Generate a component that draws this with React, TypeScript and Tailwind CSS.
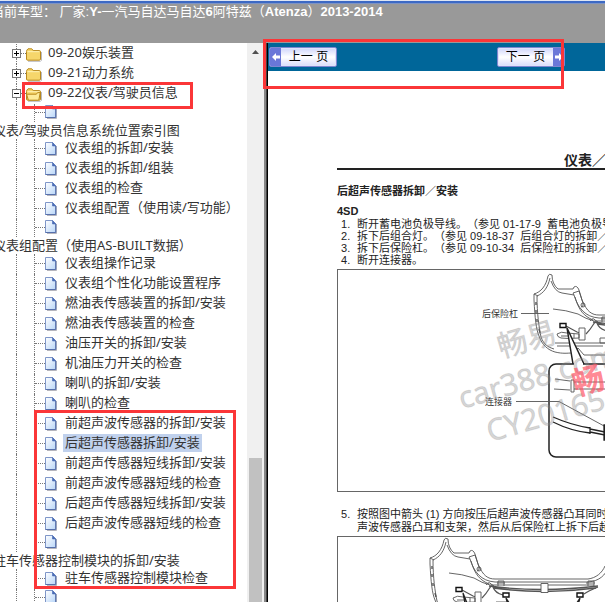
import type { ReactNode } from "react";

type TreeItem = {
  label?: string;
  wrapped?: boolean;
  active?: boolean;
};

const folders = [
  { label: "09-20娱乐装置", open: false },
  { label: "09-21动力系统", open: false },
  { label: "09-22仪表/驾驶员信息", open: true },
];

const items: TreeItem[] = [
  { label: "仪表/驾驶员信息系统位置索引图", wrapped: true },
  { label: "仪表组的拆卸/安装" },
  { label: "仪表组的拆卸/组装" },
  { label: "仪表组的检查" },
  { label: "仪表组配置（使用读/写功能）" },
  { label: "仪表组配置（使用AS-BUILT数据）", wrapped: true },
  { label: "仪表组操作记录" },
  { label: "仪表组个性化功能设置程序" },
  { label: "燃油表传感装置的拆卸/安装" },
  { label: "燃油表传感装置的检查" },
  { label: "油压开关的拆卸/安装" },
  { label: "机油压力开关的检查" },
  { label: "喇叭的拆卸/安装" },
  { label: "喇叭的检查" },
  { label: "前超声波传感器的拆卸/安装" },
  { label: "后超声传感器拆卸/安装", active: true },
  { label: "前超声传感器短线拆卸/安装" },
  { label: "前超声波传感器短线的检查" },
  { label: "后超声传感器短线拆卸/安装" },
  { label: "后超声波传感器短线的检查" },
  { label: "驻车传感器控制模块的拆卸/安装", wrapped: true },
  { label: "驻车传感器控制模块检查" },
  { wrapped: true },
];

const FolderIcon = ({ open }: { open: boolean }) => (
  <svg className="mt-1 h-[14px] w-4 shrink-0" viewBox="0 0 16 14">
    <path d="M2 13.3h12.5l1-1V4" fill="none" stroke="#b9b9c0" />
    <path
      d="M.5 3.5V11a1.2 1.2 0 0 0 1.2 1.2h11.6a1.2 1.2 0 0 0 1.2-1.2V3.8a1.2 1.2 0 0 0-1.2-1.2H7.2L5.8.8H2L.8 2.2z"
      fill="#f6d66b"
      stroke="#b8891c"
    />
    <path d="M1.5 3.7h12" stroke="#fff3b8" />
    {open && (
      <path
        d="M.6 6.2h9.8l1.2-1.6h2.6l-1.2 6.6a1.2 1.2 0 0 1-1.2 1H3.2a1.2 1.2 0 0 1-1.1-.9z"
        fill="#fdeb9a"
        stroke="#b8891c"
      />
    )}
  </svg>
);

const PageIcon = () => (
  <svg className="h-[14px] w-3 shrink-0" viewBox="0 0 12 14">
    <defs>
      <linearGradient id="page" x1="0" y1="0" x2="1" y2="1">
        <stop offset="0" stopColor="#ffffff" />
        <stop offset="1" stopColor="#b9d6f8" />
      </linearGradient>
    </defs>
    <path d="M2 13.5h9.5V4" fill="none" stroke="#b5b5bd" />
    <path d="M.5.5h7L10.7 4v8.5H.5z" fill="url(#page)" stroke="#7f96c8" />
    <path d="M7.5.5V4h3.2z" fill="#4a6cb5" stroke="#4a6cb5" strokeWidth=".6" />
    <path d="M.5 12.5h10.2V4" fill="none" stroke="#5670ac" />
  </svg>
);

const FolderRow = ({ label, open }: { label: string; open: boolean }) => (
  <li className="flex h-5 pl-[19px]">
    <div className="flex w-[9px] flex-col items-center">
      <div className="h-[5px] border-l border-dotted border-[#777]" />
      <button
        aria-label={label}
        className="relative flex h-[9px] w-[9px] shrink-0 items-center justify-center border border-[#777] bg-white"
      >
        <span className="h-px w-[5px] bg-black" />
        {!open && <span className="absolute h-[5px] w-px bg-black" />}
      </button>
      <div className="flex-1 border-l border-dotted border-[#777]" />
    </div>
    <div className="mt-[9px] h-px w-[5px] border-t border-dotted border-[#777]" />
    <FolderIcon open={open} />
    <a href="#" className="ml-1 px-0.5 leading-4">
      {label}
    </a>
  </li>
);

const PageRow = ({ label, wrapped, active }: TreeItem) => (
  <li>
    <div className={wrapped ? "flex h-[18px] pl-[23px]" : "flex h-5 pl-[23px]"}>
      <div className="w-[18px] border-l border-dotted border-[#777]" />
      <div className="w-[11px] border-l border-dotted border-[#777]">
        <div className={wrapped ? "mt-2 border-t border-dotted border-[#777]" : "mt-[9px] border-t border-dotted border-[#777]"} />
      </div>
      <div className={wrapped ? "pt-px" : "pt-[3px]"}>
        <PageIcon />
      </div>
      {!wrapped && (
        <a
          href="#"
          className={
            active
              ? "ml-1.5 h-[18px] bg-[#c0d1ed] px-0.5 leading-4"
              : "ml-1.5 px-0.5 leading-4"
          }
        >
          {label}
        </a>
      )}
    </div>
    {wrapped && (
      <a href="#" className="block h-[17px] leading-[17px]">
        {label}
      </a>
    )}
  </li>
);

const Sidebar = () => (
  <aside className="flex w-[264px] shrink-0 overflow-hidden bg-white">
    <nav className="min-w-0 flex-1 overflow-hidden pt-px">
      <ul className="-ml-[7px] font-['Noto_Sans','Noto_Sans_CJK_SC',sans-serif] text-[13px] whitespace-nowrap text-[#333]">
        {folders.map((folder) => (
          <FolderRow key={folder.label} {...folder} />
        ))}
        {items.map((item, index) => (
          <PageRow key={index} {...item} />
        ))}
      </ul>
    </nav>
    <div className="flex w-[17px] flex-col items-center justify-between bg-[#f0f0f0]">
      <svg className="mt-[7px] h-1 w-[7px]" viewBox="0 0 7 4">
        <path d="M0 4 3.5 0 7 4z" fill="#505050" />
      </svg>
      <div className="h-[144px] w-[13px] bg-[#c1c1c1]" />
    </div>
  </aside>
);

const ArrowCap = ({ direction }: { direction: "left" | "right" }) => (
  <span className="flex w-[11px] items-center justify-center bg-[#6a77d8]">
    <svg className="h-2 w-2" viewBox="0 0 8 8">
      <path
        d={direction === "left" ? "M0 4 4 0v2.5h4v3H4V8z" : "M8 4 4 0v2.5H0v3h4V8z"}
        fill="#fff"
      />
    </svg>
  </span>
);

const PagerButton = ({ direction, children }: { direction: "left" | "right"; children: ReactNode }) => (
  <button className="flex h-5 w-[68px] overflow-hidden rounded-xs border border-[#7e86d0] bg-linear-to-b from-[#cfd4fb] via-white to-[#d9dcfa] text-xs text-black shadow-[0_0_0_1px_#dfe3fa_inset]">
    {direction === "left" && <ArrowCap direction="left" />}
    <span className="flex-1 text-center leading-[18px] whitespace-nowrap">{children}</span>
    {direction === "right" && <ArrowCap direction="right" />}
  </button>
);

const Bumper = () => (
  <g fill="none" stroke="#555" strokeWidth=".9">
    <path d="M548 276C546 286 541 292 534 294L534 300C535 318 536 329 539 336C542 345 548 350 555 352C563 354 568 353 572 353L578 348L584 355H700" />
    <path d="M548 276Q549 273 552 275Q552 284 558 289H573L574 287Q577 285 579 290L582 300C587 312 592 315 599 315H692C700 314 706 309 709 302" />
    <path d="M550 278C548 287 544 293 537 296C537 314 539 327 541 337C544 345 548 347 554 349" />
    <path d="M534 294L538 296M551 281Q555 292 562 293L574 295C578 308 585 317 599 318H692C704 317 709 311 713 303" />
    <path d="M574 295L573 293L579 291L583 303Q584 307 581 307M553 309Q566 310 578 314Q586 319 594 321H698" />
    <path d="M575 297C579 311 584 316 593 320" />
    <circle cx="583" cy="305" r="2" />
    <path d="M536 302v3M536 310v3M537 319v3M539 329l1 4" strokeWidth="1.4" />
    <path d="M590 321q3-4 5-1l3 2M602 322v-5h6v5M698 322v-5h-6v5M601 319h8M690 319h9" />
    <path d="M593 322Q645 329 702 322M597 324Q648 331 700 324" strokeWidth="1.3" />
    <path d="M645 319.5h7v9h-7z" fill="#fff" />
    <path d="M566 326l11 6 3 1M586 334q4-4 7-9t4-2q2 6 10 8M702 323q-10 4-14 7" strokeWidth="1.2" />
    <path d="M579 328h6v12h-6z" fill="#fff" />
    <path d="M557 334q4-3 10-1l12 1v4q-12 1-18 0-4-1-4-4zM569 334v4M574 334v4M561 336h8" />
    <path d="M555 343h50M557 346h46M600 338h12v5h-12zM610 346h88" />
    <path d="M560 323.5h6v4h-6zM607 329h6v4h-6zM681 329h6v4h-6z" stroke="#111" strokeWidth="1.4" fill="#fff" />
  </g>
);

const ConnectorFigure = () => (
  <svg className="block h-[221px] w-[430px]" viewBox="338 270 430 221">
    <Bumper />
    <path d="M573 364L567 328L584 364" fill="#fff" stroke="#222" strokeWidth="1.5" />
    <rect x="549" y="364" width="190" height="93" rx="7" fill="#fff" stroke="#222" strokeWidth="1.5" />
    <path d="M574 364h9" stroke="#fff" strokeWidth="2" />
    <g fill="none" stroke="#555" strokeWidth=".9">
      <path d="M555 379l15 2M554 389l16 1M574 382h40M574 389h40" />
      <path d="M571 380h3v12h-3z" />
      <path d="M521 313.5h28M516 401.5h43l46 25" />
    </g>
    <g fill="none" stroke="#222" strokeWidth="1.3">
      <path d="M553 417q18 8 37 11M553 422q18 9 37 11M590 427v7M590 429l15 3M590 432l15 3" />
      <path d="M604 425h8v15h-8z" fill="#222" />
    </g>
    <g className="font-['Noto_Sans_CJK_SC',sans-serif] text-[9px]" fill="#333">
      <text x="482" y="317">后保险杠</text>
      <text x="485" y="405">连接器</text>
    </g>
    <g
      className="font-['Noto_Sans','Noto_Sans_CJK_SC',sans-serif] text-[30px]"
      fill="#888"
      fillOpacity=".36"
      stroke="#888"
      strokeOpacity=".2"
      strokeWidth="1"
    >
      <text transform="translate(501 358) rotate(-16)">畅易</text>
      <text transform="translate(462 409) rotate(-16)">car388.com</text>
      <text transform="translate(490 442) rotate(-16)">CY20165</text>
    </g>
    <text
      className="font-['Noto_Sans_CJK_SC',sans-serif] text-[32px] font-bold"
      fill="#ff5566"
      fillOpacity=".7"
      transform="translate(576 396) rotate(-16)"
    >
      畅易
    </text>
  </svg>
);

const SensorFigure = () => (
  <svg className="block h-[221px] w-[430px]" viewBox="338 536 430 221">
    <g transform="translate(-104 263)">
      <Bumper />
      <path d="M567 329l4 20M567 329l8 20M610 334l4 14M610 334l9 14M684 334l-4 14M684 334l-9 14" stroke="#222" strokeWidth="1.3" />
    </g>
  </svg>
);

const Step = ({ number, children }: { number: number; children: ReactNode }) => (
  <li className="flex">
    <span className="w-4 shrink-0">{number}.</span>
    <p className="whitespace-pre">{children}</p>
  </li>
);

const Manual = () => (
  <article className="overflow-hidden pt-[79px] pl-[69px] font-['Liberation_Sans','Noto_Sans_CJK_SC',sans-serif] text-[11px] leading-3 whitespace-nowrap text-[#222] [text-spacing-trim:space-all]">
    <h1 className="flex h-5 w-[432px] border-b-2 border-[#222] pl-[227px] text-sm leading-5 font-bold">
      <span>仪表／驾驶员信息</span>
    </h1>
    <h2 className="mt-[15px] text-[11px] leading-3 font-bold">后超声传感器拆卸／安装</h2>
    <h3 className="mt-2 text-[11px] leading-3 font-bold">4SD</h3>
    <ol className="mt-px pl-1">
      <Step number={1}>断开蓄电池负极导线。（参见 01-17-9  蓄电池负极导线的断开／连接）</Step>
      <Step number={2}>拆下后组合灯。（参见 09-18-37  后组合灯的拆卸／安装）</Step>
      <Step number={3}>拆下后保险杠。（参见 09-10-34  后保险杠的拆卸／安装）</Step>
      <Step number={4}>断开连接器。</Step>
    </ol>
    <figure className="mt-[3px] w-[432px] border border-[#666]">
      <ConnectorFigure />
    </figure>
    <ol className="mt-4 pl-1 leading-[13px]">
      <Step number={5}>
        {"按照图中箭头 (1) 方向按压后超声波传感器凸耳同时拉出后超\n声波传感器凸耳和支架，然后从后保险杠上拆下后超声波传感器。"}
      </Step>
    </ol>
    <figure className="mt-0.5 w-[432px] border border-[#666]">
      <SensorFigure />
    </figure>
  </article>
);

const App = () => {
  return (
    <div className="relative flex h-screen flex-col overflow-hidden bg-white">
      <header className="h-[43px] shrink-0 overflow-hidden border-t border-[#dfe6f3] bg-[#999]">
        <div className="h-[3px] border-b border-[#7d93c4] bg-[#3c69c4]" />
        <p className="-ml-[9px] font-['Liberation_Sans','Noto_Sans_CJK_SC',sans-serif] text-[13px] leading-4 whitespace-pre text-white [text-spacing-trim:space-all]">
          当前车型： 厂家:<b>Y-</b>一汽马自达马自达<b>6</b>阿特兹（<b>Atenza</b>）<b>2013-2014</b>
        </p>
      </header>
      <div className="flex min-h-0 flex-1">
        <Sidebar />
        <div className="w-1 shrink-0 border-r border-l-2 border-r-black border-l-[#888] bg-[#444]" />
        <main className="min-w-0 flex-1 overflow-hidden">
          <div className="flex h-7 items-center gap-40 bg-[#006699] pl-px font-['Liberation_Sans','Noto_Sans_CJK_SC',sans-serif]">
            <PagerButton direction="left">上一 页</PagerButton>
            <PagerButton direction="right">下一 页</PagerButton>
          </div>
          <Manual />
        </main>
      </div>

      {/* highlight frames */}
      <div className="pointer-events-none absolute top-[82px] left-[22px] h-[27px] w-[171px] border-3 border-[#fb3638]" />
      <div className="pointer-events-none absolute top-[410px] left-[34px] h-[179px] w-[202px] border-3 border-[#fb3638]" />
      <div className="pointer-events-none absolute top-[39px] left-[263px] h-[50px] w-[301px] border-3 border-[#fb3638]" />
    </div>
  );
};

export default App;
